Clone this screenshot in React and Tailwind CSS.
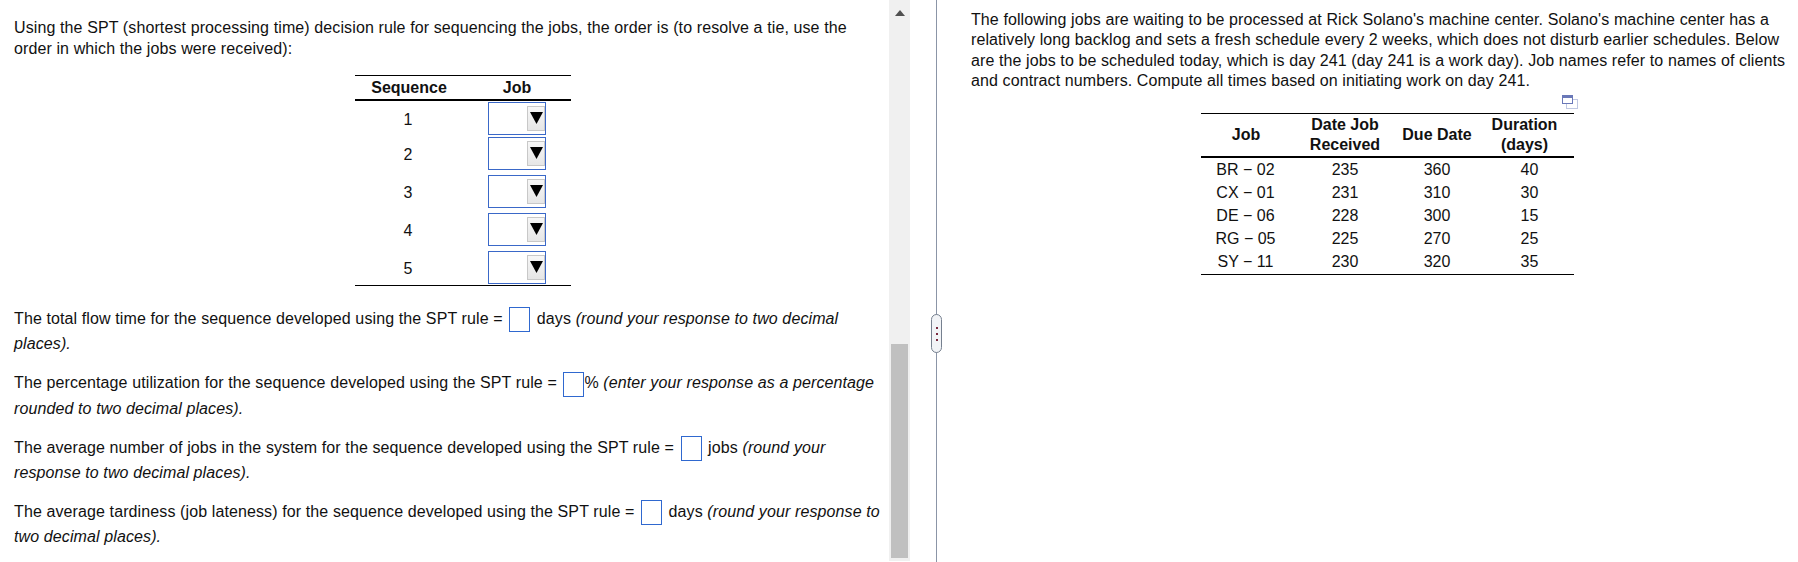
function Box({ cls = "mx-[2px]" }) {
  return <span className={"inline-block align-middle w-[21px] h-[25px] border border-[#2f68cf] bg-white " + cls} />;
}
function Sel() {
  return (
    <div className="w-[58px] h-[33px] border border-[#3a68c8] bg-white flex items-start justify-end pt-[3px]">
      <div className="w-[18px] h-[25px] border border-[#c8c8c8] bg-gradient-to-b from-[#f7f7f7] to-[#e6e6e6] flex justify-center pt-[5px]">
        <svg width="13" height="12" viewBox="0 0 13 12"><path d="M0 0H13L6.5 12Z" fill="#000" /></svg>
      </div>
    </div>
  );
}
const seq = [
  ["1", "h-[34px]"],
  ["2", "h-[35px]"],
  ["3", "h-[38px]"],
  ["4", "h-[38px]"],
  ["5", "h-[38px]"],
];
const jobs = [
  ["BR − 02", "235", "360", "40"],
  ["CX − 01", "231", "310", "30"],
  ["DE − 06", "228", "300", "15"],
  ["RG − 05", "225", "270", "25"],
  ["SY − 11", "230", "320", "35"],
];
export default function App() {
  return (
    <div className="flex h-[562px] w-[1798px] overflow-hidden bg-white text-[16px] leading-[22px] text-[#111] font-['Liberation_Sans',Arial,sans-serif]">
      <div className="w-[889px] shrink-0 pl-[14px] pt-[17px] tracking-[0.11px]">
        <p className="w-[870px] leading-[21px]">Using the SPT (shortest processing time) decision rule for sequencing the jobs, the order is (to resolve a tie, use the order in which the jobs were received):</p>
        <div className="ml-[341px] mt-[16px] w-[216px] border-t border-b border-black tracking-normal">
          <div className="flex h-[25px] border-b-2 border-black font-bold items-center">
            <div className="w-[108px] text-center">Sequence</div>
            <div className="w-[108px] text-center">Job</div>
          </div>
          <div className="pb-[1px]">
            {seq.map(([n, h]) => (
              <div key={n} className={"flex items-end " + h}>
                <div className="w-[108px] h-[33px] pt-[3px] pr-[2px] flex items-center justify-center">{n}</div>
                <div className="pl-[25px]"><Sel /></div>
              </div>
            ))}
          </div>
        </div>
        <div className="mt-[21px] w-[870px]">
          <p className="leading-[24px]">The total flow time for the sequence developed using the SPT rule = <Box /> days <i>(round your response to two decimal places).</i></p>
          <p className="mt-[15px] leading-[23px]">The percentage utilization for the sequence developed using the SPT rule = <Box cls="ml-[2px]" />% <i>(enter your response as a percentage rounded to two decimal places).</i></p>
          <p className="mt-[16px] leading-[23px]">The average number of jobs in the system for the sequence developed using the SPT rule = <Box /> jobs <i>(round your response to two decimal places).</i></p>
          <p className="mt-[16px] leading-[23px]">The average tardiness (job lateness) for the sequence developed using the SPT rule = <Box /> days <i>(round your response to two decimal places).</i></p>
        </div>
      </div>
      <div className="w-[21px] shrink-0 h-[561px] bg-[#f0f0f0] flex flex-col items-center justify-between">
        <svg className="mt-[10px]" width="10" height="6" viewBox="0 0 10 6"><path d="M5 0L10 6H0Z" fill="#505050" /></svg>
        <div className="w-[17px] h-[214px] bg-[#c0c0c0] mb-[3px]" />
      </div>
      <div className="relative w-[52px] shrink-0 flex justify-center">
        <div className="w-[1px] h-full bg-[#8b95a7]" />
        <div className="absolute left-[21px] top-[314px] w-[11px] h-[39px] rounded-[6px] border border-[#76808f] bg-[#f2f4f7] flex flex-col items-center justify-center gap-[4px]">
          <span className="w-[2px] h-[2px] bg-[#7a2a40]" />
          <span className="w-[2px] h-[2px] bg-[#7a2a40]" />
          <span className="w-[2px] h-[2px] bg-[#7a2a40]" />
        </div>
      </div>
      <div className="pl-[9px] pt-[10px] flex-1">
        <p className="w-[822px] leading-[20.3px] tracking-[0.1px]">The following jobs are waiting to be processed at Rick Solano's machine center. Solano's machine center has a relatively long backlog and sets a fresh schedule every 2 weeks, which does not disturb earlier schedules. Below are the jobs to be scheduled today, which is day 241 (day 241 is a work day). Job names refer to names of clients and contract numbers. Compute all times based on initiating work on day 241.</p>
        <div className="ml-[230px] w-[373px]">
          <div className="flex justify-end h-[22px] pt-[4px] -mr-[4px]">
            <svg width="16" height="14" viewBox="0 0 16 14" fill="none">
              <rect x="4.5" y="4.5" width="11" height="9" stroke="#c0c8e2" />
              <rect x="0.5" y="0.5" width="10" height="8" stroke="#6a78b8" fill="#fff" />
              <rect x="0" y="0" width="11" height="3" fill="#6a78b8" />
            </svg>
          </div>
          <div className="border-t border-b border-black pb-[1px]">
            <div className="flex h-[44px] border-b-2 border-black font-bold leading-[20px] items-center text-center">
              <div className="w-[90px]">Job</div>
              <div className="w-[108px]">Date Job<br />Received</div>
              <div className="w-[76px]">Due Date</div>
              <div className="w-[99px]">Duration<br />(days)</div>
            </div>
            {jobs.map((r) => (
              <div key={r[0]} className="flex h-[23px] pt-[1px] items-center text-center">
                <div className="w-[90px] pr-[1px]">{r[0]}</div>
                <div className="w-[108px]">{r[1]}</div>
                <div className="w-[76px]">{r[2]}</div>
                <div className="w-[99px] pl-[10px]">{r[3]}</div>
              </div>
            ))}
          </div>
        </div>
      </div>
    </div>
  );
}
